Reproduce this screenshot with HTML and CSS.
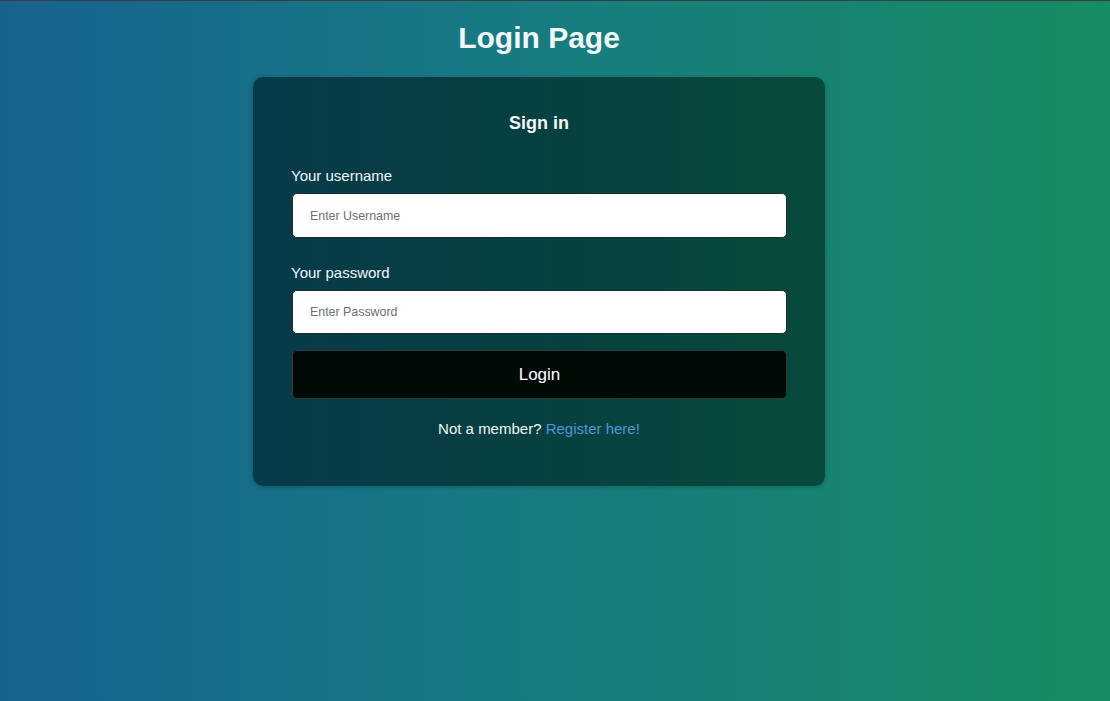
FILE: index.html
```html
<!DOCTYPE html>
<html lang="en">
<head>
<meta charset="utf-8">
<title>Login Page</title>
<link rel="stylesheet" href="styles.css">
</head>
<body>
<main class="page">
  <h1 class="page-title">Login Page</h1>
  <form class="card">
    <h2 class="card-title">Sign in</h2>
    <label class="field-label" for="username">Your username</label>
    <input class="field-input" id="username" type="text" placeholder="Enter Username">
    <label class="field-label field-label-second" for="password">Your password</label>
    <input class="field-input field-input-short" id="password" type="password" placeholder="Enter Password">
    <button class="login-btn" type="button">Login</button>
    <p class="register">Not a member? <a class="register-link" href="#">Register here!</a></p>
  </form>
</main>
</body>
</html>
```
FILE: styles.css
```css
* { box-sizing: border-box; }
html, body { height: 100%; }
body {
  margin: 0;
  border-top: 1px solid #3b3b40;
  background: linear-gradient(to right, #17638f 0%, #177a82 45%, #168c63 100%);
  font-family: "Liberation Sans", Arial, sans-serif;
  color: #ffffff;
}
.page {
  display: flex;
  flex-direction: column;
  align-items: center;
  padding-right: 32px;
}
.page-title {
  margin: 19px 0 22px;
  font-size: 30px;
  font-weight: bold;
  line-height: 35px;
  color: #f2f7f7;
}
.card {
  width: 572px;
  display: flex;
  flex-direction: column;
  padding: 36px 38px 49px 38px;
  border-radius: 10px;
  background: linear-gradient(to right, #073a4a 0%, #07413f 55%, #074a3b 100%);
  box-shadow: 0 1px 4px rgba(0, 0, 0, 0.25);
}
.card-title {
  margin: 0 0 33px;
  text-align: center;
  font-size: 18px;
  line-height: 21px;
  font-weight: bold;
  color: #f4f8f8;
}
.field-label {
  font-size: 15px;
  line-height: 17px;
  margin: 0 0 9px;
  color: #f2f6f6;
}
.field-label-second { margin-top: 26px; }
.field-input {
  width: 495px;
  height: 45px;
  margin-left: 1px;
  padding: 0 17px;
  border: 1px solid #1c2b2b;
  border-radius: 5px;
  background: #ffffff;
  font-family: "Liberation Sans", Arial, sans-serif;
  font-size: 12.4px;
  color: #222;
  outline: none;
}
.field-input-short { height: 44px; }
.field-input::placeholder { color: #6f6f6f; }
.login-btn {
  width: 495px;
  height: 49px;
  margin: 16px 0 0 1px;
  border: 1px solid #2a3a36;
  border-radius: 5px;
  background: #020a06;
  color: #ffffff;
  font-family: "Liberation Sans", Arial, sans-serif;
  font-size: 17px;
}
.register {
  margin: 21px 0 0;
  text-align: center;
  font-size: 15px;
  line-height: 17px;
  color: #f2f6f6;
}
.register-link {
  color: #4d95de;
  text-decoration: none;
}
```
